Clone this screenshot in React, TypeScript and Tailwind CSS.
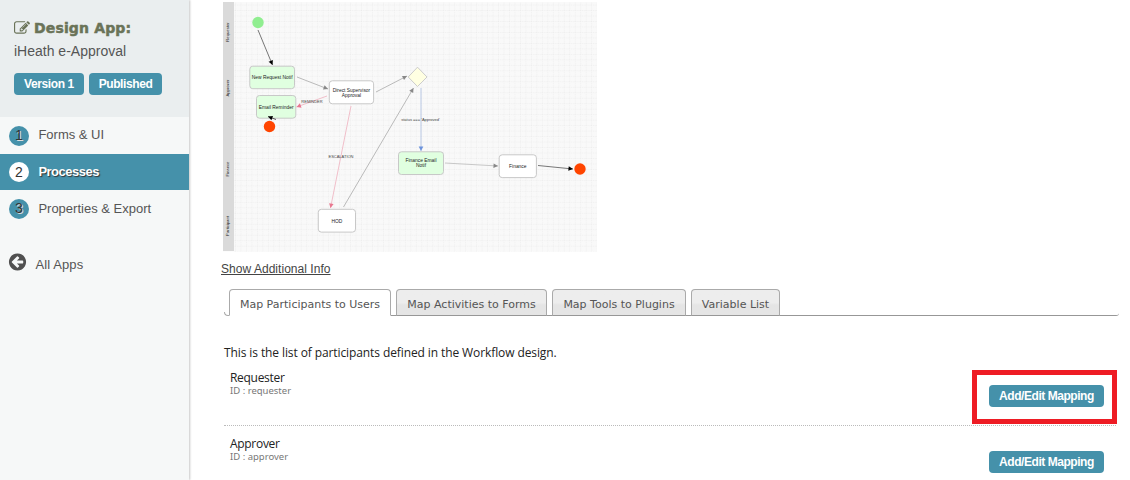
import React from "react";

const EDIT =
  "M888 1184l116-116-152-152-116 116v56h96v96h56zm440-720q-16-16-33 1l-350 350q-17 17-1 33t33-1l350-350q17-17 1-33zm80 594v190q0 119-84.5 203.5t-203.5 84.5h-832q-119 0-203.5-84.5t-84.5-203.5v-832q0-119 84.5-203.5t203.5-84.5h832q63 0 117 25 15 7 18 23 3 17-9 29l-49 49q-14 14-32 8-23-6-45-6h-832q-66 0-113 47t-47 113v832q0 66 47 113t113 47h832q66 0 113-47t47-113v-126q0-13 9-22l64-64q15-15 35-7t20 29zm-96-738l288 288-672 672h-288v-288zm444 132l-92 92-288-288 92-92q28-28 68-28t68 28l152 152q28 28 28 68t-28 68z";
const BACK =
  "M1408 960v-128q0-26-19-45t-45-19h-502l189-189q19-19 19-45t-19-45l-91-91q-18-18-45-18t-45 18l-362 362-91 91q-18 18-18 45t18 45l91 91 362 362q18 18 45 18t45-18l91-91q18-18 18-45t-18-45l-189-189h502q26 0 45-19t19-45zm256-64q0 209-103 385.5t-279.5 279.5-385.5 103-385.5-103-279.5-279.5-103-385.5 103-385.5 279.5-279.5 385.5-103 385.5 103 279.5 279.5 103 385.5z";

const steps = [
  { n: 1, label: "Forms & UI", active: false },
  { n: 2, label: "Processes", active: true },
  { n: 3, label: "Properties & Export", active: false },
];

function Sidebar() {
  return (
    <aside className="relative h-[480px] w-[189px] shrink-0 bg-[#f6f8f8] text-[#555] shadow-[1px_0_2px_rgba(0,0,0,0.22)]">
      <div className="h-[117px] bg-[#eaeeef] pl-[14px] pt-[18px]">
        <div className="flex h-[20px] items-center text-[#6a7358]">
          <svg className="-mt-px h-[16px] w-[16px] shrink-0" viewBox="0 0 1792 1792" fill="currentColor">
            <path d={EDIT} />
          </svg>
          <span className="ml-[4px] whitespace-nowrap font-['DejaVu_Sans'] text-[14px] font-bold tracking-[0.15px] [-webkit-text-stroke:0.5px_#6a7358]">Design App:</span>
        </div>
        <div className="mt-[5px] text-[14px] leading-[17px]">iHeath e-Approval</div>
        <div className="mt-[13px] flex gap-[5px] text-[12px] font-bold leading-[22px] tracking-[-0.4px] text-white">
          <span className="w-[70px] rounded-[4px] bg-[#4591aa] text-center">Version 1</span>
          <span className="w-[73px] rounded-[4px] bg-[#4591aa] text-center">Published</span>
        </div>
      </div>
      <nav className="flex flex-col text-[13px]">
        {steps.map((s) => (
          <div
            key={s.n}
            className={
              s.active
                ? "flex h-[36px] items-center bg-[#4591aa] pl-[9px] font-bold text-white [text-shadow:1px_1px_1px_#333]"
                : "flex h-[37px] items-center pl-[9px]"
            }
          >
            <span
              className={
                s.active
                  ? "flex h-5 w-5 items-center justify-center rounded-full bg-white text-[14px] font-normal text-[#333] [text-shadow:none]"
                  : "flex h-5 w-5 items-center justify-center rounded-full bg-[#4591aa] text-[14px] text-[#333] [text-shadow:1px_1px_0_#ddd]"
              }
            >
              {s.n}
            </span>
            <span className={s.active ? "ml-[9.4px] tracking-[-0.5px]" : s.n === 1 ? "ml-[9.4px] -mt-px" : "ml-[9.4px] mt-px"}>{s.label}</span>
          </div>
        ))}
      </nav>
      <div className="mt-[24px] flex items-center pl-[7px]">
        <svg className="h-[20px] w-[21px] shrink-0" viewBox="0 0 1792 1792" fill="#505050">
          <path d={BACK} />
        </svg>
        <span className="ml-[7.5px] mt-[6px] text-[13px] leading-[16px] tracking-[0.1px]">All Apps</span>
      </div>
    </aside>
  );
}

function Arrow({ x1, y1, x2, y2, color, head }: { x1: number; y1: number; x2: number; y2: number; color: string; head: string }) {
  const angle = (Math.atan2(y2 - y1, x2 - x1) * 180) / Math.PI;
  return (
    <g>
      <line x1={x1} y1={y1} x2={x2} y2={y2} stroke={color} strokeWidth="0.8" />
      <path d="M0 0L-4.5 -2.3V2.3Z" fill={head} transform={`translate(${x2} ${y2}) rotate(${angle})`} />
    </g>
  );
}

function Box({ x, y, w, h, fill, lines }: { x: number; y: number; w: number; h: number; fill: string; lines: string[] }) {
  return (
    <g>
      <rect x={x} y={y} width={w} height={h} rx="3" fill={fill} stroke="#c8c8c8" />
      {lines.map((t, i) => (
        <text key={t} x={x + w / 2} y={y + h / 2 + 1.8 + (i - (lines.length - 1) / 2) * 5} textAnchor="middle" fill="#222">
          {t}
        </text>
      ))}
    </g>
  );
}

function Diagram() {
  const lanes: [string, number][] = [["Requester", 32], ["Approver", 88], ["Finance", 169], ["Participant", 226]];
  return (
    <svg className="ml-[33px] mt-[2px] block h-[250px] w-[375px] shrink-0" viewBox="222 2 375 250" fontFamily="Liberation Sans, sans-serif" fontSize="4.9">
      <defs>
        <pattern id="grid" x="240.5" y="4.6" width="5.48" height="5.48" patternUnits="userSpaceOnUse">
          <path d="M0 .5H5.48M.5 0V5.48" stroke="#ececec" strokeWidth="0.7" strokeDasharray="1 1" />
        </pattern>
      </defs>
      <rect x="223" y="2" width="374" height="249.5" fill="#f9f9f9" />
      <rect x="234" y="2" width="363" height="249.5" fill="url(#grid)" />
      <rect x="223" y="2" width="11" height="249" fill="#dadada" />
      {lanes.map(([t, y]) => (
        <text key={t} transform={`translate(228.8 ${y}) rotate(-90)`} textAnchor="middle" fontSize="4.2" fill="#222">
          {t}
        </text>
      ))}
      <Arrow x1={258} y1={30} x2={272.5} y2={65} color="#555" head="#000" />
      <Arrow x1={297} y1={77} x2={328} y2={89} color="#aaa" head="#888" />
      <Arrow x1={376} y1={92} x2={407} y2={76} color="#aaa" head="#888" />
      <Arrow x1={327} y1={96} x2={296.5} y2={107} color="#efb0be" head="#e87890" />
      <Arrow x1={351} y1={106} x2={330.5} y2={208} color="#efb0be" head="#e87890" />
      <Arrow x1={343.5} y1={207} x2={413.5} y2={88} color="#aaa" head="#888" />
      <Arrow x1={421} y1={88} x2={421} y2={151} color="#a9bce0" head="#6c93dc" />
      <Arrow x1={445} y1={163} x2={498} y2={166} color="#bbb" head="#888" />
      <Arrow x1={538} y1={165.5} x2={573} y2={169} color="#555" head="#000" />
      <circle cx="258" cy="22.5" r="5.7" fill="#90ee90" />
      <circle cx="269.5" cy="126.5" r="5.7" fill="#ff4500" />
      <circle cx="580" cy="169" r="5.7" fill="#ff4500" />
      <path d="M417.5 67.2L427 77L417.5 86.5L408.2 77Z" fill="#ffffe2" stroke="#ccc" />
      <Box x={249.8} y={66.2} w={44.7} h={22.5} fill="#e0ffe0" lines={["New Request Notif"]} />
      <Box x={256.5} y={95.5} w={39.3} h={22.7} fill="#e0ffe0" lines={["Email Reminder"]} />
      <Box x={329.3} y={80.8} w={44.3} h={23} fill="#fff" lines={["Direct Supervisor", "Approval"]} />
      <Box x={398.5} y={151.8} w={45} h={22.7} fill="#e0ffe0" lines={["Finance Email", "Notif"]} />
      <Box x={499.2} y={154.8} w={37.2} h={22.8} fill="#fff" lines={["Finance"]} />
      <Box x={318.3} y={209.3} w={37.2} h={22.8} fill="#fff" lines={["HOD"]} />
      <Arrow x1={276} y1={119.5} x2={268} y2={116.5} color="#333" head="#000" />
      <g fontSize="4" fill="#444" textAnchor="middle">
        <text x="312" y="102.8">REMINDER</text>
        <text x="341" y="157.6">ESCALATION</text>
        <text x="420.5" y="120.7">status === 'Approved'</text>
      </g>
    </svg>
  );
}

const tabs = [
  { label: "Map Participants to Users", className: "w-[162px] bg-white" },
  { label: "Map Activities to Forms", className: "w-[151px] bg-linear-to-b from-[#ededed] from-50% to-[#e5e5e5] to-60%" },
  { label: "Map Tools to Plugins", className: "w-[134px] bg-linear-to-b from-[#ededed] from-50% to-[#e5e5e5] to-60%" },
  { label: "Variable List", className: "w-[89px] bg-linear-to-b from-[#ededed] from-50% to-[#e5e5e5] to-60%" },
];

function Tabs() {
  return (
    <div className="ml-[35px] mt-[12px] flex h-[27px] w-[895px] shrink-0">
      <div className="h-[27px] w-[5px] shrink-0 pt-[23px]">
        <div className="h-[4px] rounded-bl-[4px] border-b border-l border-[#aaa]" />
      </div>
      {tabs.map((t, i) => (
        <React.Fragment key={t.label}>
          {i > 0 && <div className="w-[5px] shrink-0 border-b border-[#979797]" />}
          <div
            className={`flex h-[27px] shrink-0 items-center justify-center whitespace-nowrap rounded-t-[4px] border border-[#aaa] pt-[5px] font-['DejaVu_Sans'] text-[11px] text-[#555] ${t.className} ${i === 0 ? "border-b-transparent" : "border-b-[#979797]"}`}
          >
            {t.label}
          </div>
        </React.Fragment>
      ))}
      <div className="flex-1 rounded-br-[3px] border-b border-[#979797]" />
    </div>
  );
}

function Participant({ name, id, marked }: { name: string; id: string; marked?: boolean }) {
  return (
    <div className="ml-[35px] flex h-[66px] w-[892px] shrink-0 items-start border-b border-dotted border-[#bbb] font-['Open_Sans']">
      <div className="ml-[6px] mt-[10px]">
        <div className="text-[12px] leading-[16px] tracking-[-0.3px] text-[#222]">{name}</div>
        <div className="-mt-px font-['Noto_Sans'] text-[9.5px] leading-[12px] text-[#777]">ID : {id}</div>
      </div>
      <div className="relative ml-auto mr-[12px] mt-[25px] h-[22px] w-[115px] rounded-[4px] bg-[#4591aa] text-center font-['Liberation_Sans'] text-[12px] font-bold leading-[22px] tracking-[-0.45px] text-white">
        Add/Edit Mapping
        {marked && <div className="absolute -left-[17px] -top-[15px] h-[54px] w-[145px] border-[5px] border-[#ee1c24]" />}
      </div>
    </div>
  );
}

export default function App() {
  return (
    <div className="flex h-[480px] w-[1130px] overflow-hidden bg-white font-['Liberation_Sans',sans-serif]">
      <Sidebar />
      <main className="flex min-w-0 flex-1 flex-col">
        <Diagram />
        <div className="ml-[32px] mt-[9px] shrink-0 text-[12px] leading-[16px] tracking-[0.04px] text-[#444] underline">Show Additional Info</div>
        <Tabs />
        <p className="ml-[35px] mt-[29px] h-[15px] shrink-0 font-['Open_Sans'] text-[12px] leading-[16px] tracking-[-0.1px] text-[#222]">
          This is the list of participants defined in the Workflow design.
        </p>
        <Participant name="Requester" id="requester" marked />
        <Participant name="Approver" id="approver" />
      </main>
    </div>
  );
}
